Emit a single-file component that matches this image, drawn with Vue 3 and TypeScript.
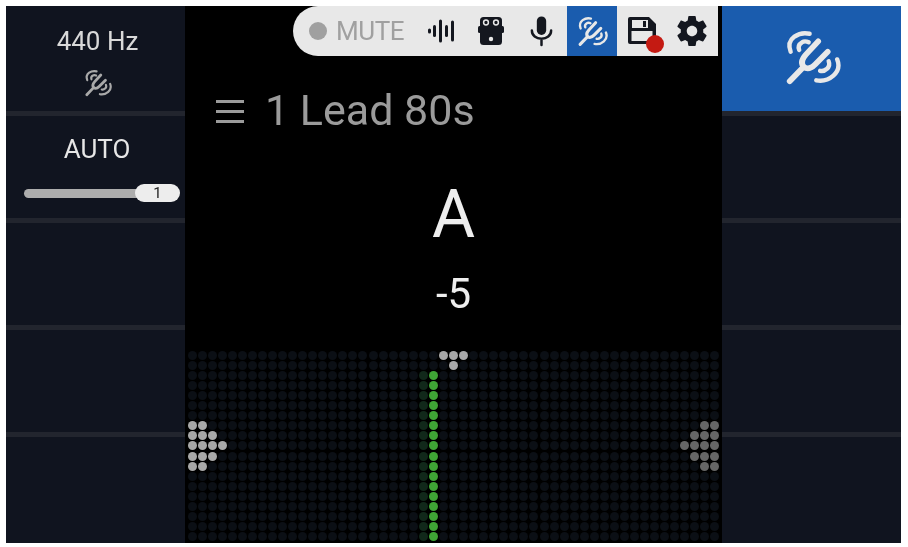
<script setup lang="ts">
import { computed } from 'vue'

const COLS = 53
const ROWS = 19

function dotClass(c: number, r: number): string {
  const dr = Math.abs(r - 9)
  if (dr <= 2 && c <= 3 - dr) return 'arrow-left'
  if (dr <= 2 && 52 - c <= 3 - dr) return 'arrow-right'
  if (r === 0 && c >= 25 && c <= 27) return 'arrow-top'
  if (r === 1 && c === 26) return 'arrow-top'
  if (c === 24 && r >= 2) return 'green'
  if (c === 23 && r >= 2) return 'green-dim'
  return ''
}

const dots = computed(() => {
  const list: { id: number; cls: string }[] = []
  for (let r = 0; r < ROWS; r++) {
    for (let c = 0; c < COLS; c++) {
      list.push({ id: r * COLS + c, cls: dotClass(c, r) })
    }
  }
  return list
})

const leftCells = [3, 4, 5]
const rightCells = [1, 2, 3, 4]
</script>

<template>
  <div class="screen">
    <svg class="defs" width="0" height="0" aria-hidden="true">
      <symbol id="fork" viewBox="0 0 60 60">
        <g fill="none" stroke="currentColor" stroke-linecap="round" stroke-linejoin="round">
          <path stroke-width="6" d="M6 55 L20 40.5" />
          <path stroke-width="6" d="M36 13 L23 27 Q16 35 21 40 Q26 44 33 37 L46 24" />
          <path stroke-width="4.6" d="M7 24 Q3 14 11 8 Q18 3 27 5" />
          <path stroke-width="4.6" d="M16 22 Q14 17 19 14 Q22 12 26 14" />
          <path stroke-width="4.6" d="M56 32 Q60 42 52 49 Q44 56 34 54" />
          <path stroke-width="4.6" d="M47 34 Q49 39 45 42 Q42 45 38 44" />
        </g>
      </symbol>
    </svg>

    <aside class="side">
      <div class="cell freq">
        <span class="freq-label">440 Hz</span>
        <svg class="side-fork"><use href="#fork" /></svg>
      </div>
      <div class="cell auto">
        <span class="auto-label">AUTO</span>
        <div class="slider">
          <div class="track"></div>
          <div class="thumb">1</div>
        </div>
      </div>
      <div v-for="n in leftCells" :key="n" class="cell"></div>
    </aside>

    <main class="center">
      <div class="toolbar">
        <div class="mute"><span class="mute-dot"></span><span>MUTE</span></div>
        <button class="tool wave">
          <svg width="30" height="30" viewBox="0 0 30 30">
            <g fill="#14171f">
              <rect x="2" y="12.5" width="3" height="5" rx="1.5" />
              <rect x="7" y="9" width="3" height="12" rx="1.5" />
              <rect x="13" y="3.5" width="3" height="23" rx="1.5" />
              <rect x="19" y="9" width="3" height="12" rx="1.5" />
              <rect x="25" y="4.5" width="3" height="21" rx="1.5" />
            </g>
          </svg>
        </button>
        <button class="tool pedal">
          <svg width="30" height="30" viewBox="0 0 30 30">
            <rect x="2" y="10" width="26" height="7" rx="1.5" fill="#14171f" />
            <rect x="4" y="1" width="22" height="28" rx="3.5" fill="#14171f" />
            <circle cx="10" cy="6.5" r="2.4" fill="none" stroke="#e8e8e8" stroke-width="1.5" />
            <circle cx="20" cy="6.5" r="2.4" fill="none" stroke="#e8e8e8" stroke-width="1.5" />
            <circle cx="15" cy="23" r="2.2" fill="#e8e8e8" />
          </svg>
        </button>
        <button class="tool mic">
          <svg width="33" height="33" viewBox="0 0 24 24">
            <path fill="#14171f" d="M12 14.5a3.4 3.4 0 0 0 3.4-3.4V4.4a3.4 3.4 0 0 0-6.8 0v6.7a3.4 3.4 0 0 0 3.4 3.4z" />
            <path fill="none" stroke="#14171f" stroke-width="1.8" stroke-linecap="round" d="M5 11.2c0 3.8 3.2 6 7 6s7-2.2 7-6M12 17.2v4.6" />
          </svg>
        </button>
        <button class="tool active">
          <svg width="31" height="31"><use href="#fork" /></svg>
        </button>
        <button class="tool save">
          <svg width="30" height="30" viewBox="0 0 30 30">
            <path fill="#14171f" d="M3 1h19l7 7v18a2 2 0 0 1-2 2H3a2 2 0 0 1-2-2V3a2 2 0 0 1 2-2z" />
            <rect x="5" y="4" width="16" height="8" fill="#e8e8e8" />
            <rect x="16" y="5" width="3" height="6" fill="#14171f" />
            <rect x="4.5" y="15" width="21" height="10" fill="#e8e8e8" />
          </svg>
          <span class="rec"></span>
        </button>
        <button class="tool gear">
          <svg width="36" height="36" viewBox="0 0 24 24">
            <path fill="#14171f" d="M19.43 12.98c.04-.32.07-.64.07-.98s-.03-.66-.07-.98l2.11-1.65c.19-.15.24-.42.12-.64l-2-3.46c-.12-.22-.39-.3-.61-.22l-2.49 1c-.52-.4-1.08-.73-1.69-.98l-.38-2.65A.488.488 0 0 0 14 2h-4c-.25 0-.46.18-.49.42l-.38 2.65c-.61.25-1.17.59-1.69.98l-2.49-1c-.23-.09-.49 0-.61.22l-2 3.46c-.13.22-.07.49.12.64l2.11 1.65c-.04.32-.07.65-.07.98s.03.66.07.98l-2.11 1.65c-.19.15-.24.42-.12.64l2 3.46c.12.22.39.3.61.22l2.49-1c.52.4 1.08.73 1.69.98l.38 2.65c.03.24.24.42.49.42h4c.25 0 .46-.18.49-.42l.38-2.65c.61-.25 1.17-.59 1.69-.98l2.49 1c.23.09.49 0 .61-.22l2-3.46c.12-.22.07-.49-.12-.64l-2.11-1.65zM12 15.5c-1.93 0-3.5-1.57-3.5-3.5s1.57-3.5 3.5-3.5 3.5 1.57 3.5 3.5-1.57 3.5-3.5 3.5z" />
          </svg>
        </button>
      </div>

      <div class="title">
        <span class="burger"><i></i><i></i><i></i></span>
        <span>1 Lead 80s</span>
      </div>
      <div class="note">A</div>
      <div class="cents">-5</div>

      <div class="matrix">
        <span v-for="d in dots" :key="d.id" class="dot" :class="d.cls"></span>
      </div>
    </main>

    <aside class="side">
      <div class="cell selected">
        <svg class="big-fork"><use href="#fork" /></svg>
      </div>
      <div v-for="n in rightCells" :key="n" class="cell"></div>
    </aside>
  </div>
</template>

<style>
html, body { margin: 0; background: #fff; }
</style>

<style scoped>
.screen {
  display: flex;
  box-sizing: border-box;
  width: 908px;
  height: 547px;
  padding: 6px 7px 4px 6px;
  font-family: Roboto, "Liberation Sans", sans-serif;
  background: #fff;
  overflow: hidden;
  filter: blur(0.5px);
}
.defs { position: absolute; }
.side {
  width: 179px;
  flex: none;
  display: grid;
  grid-template-rows: 110px 107px 107px 107px 1fr;
  background: #10141f;
}
.cell {
  min-height: 0;
  display: flex;
  flex-direction: column;
  align-items: center;
  box-sizing: border-box;
  border-bottom: 5px solid #22252e;
}
.cell:last-child { border-bottom: 0; }
.freq { color: #d9d9d9; padding: 21px 0 0 4px; }
.freq-label { font-size: 26px; line-height: 29px; }
.side-fork { width: 28px; height: 28px; margin-top: 13px; color: #a9a9a9; }
.auto { padding: 19px 0 0 3px; color: #e6e6e6; }
.auto-label { font-size: 26px; line-height: 28px; }
.slider {
  align-self: stretch;
  display: flex;
  align-items: center;
  margin: 21px 5px 0 15px;
}
.track {
  flex: 1;
  height: 9px;
  margin-right: -4px;
  border-radius: 5px 0 0 5px;
  background: #adadad;
}
.thumb {
  width: 45px;
  height: 18px;
  border-radius: 9px;
  background: #ededed;
  color: #222;
  font-size: 15px;
  line-height: 18px;
  text-align: center;
  position: relative;
}
.selected { background: #1a5cae; justify-content: center; padding: 0 0 2px 1px; border-bottom-color: #22252e; }
.big-fork { width: 57px; height: 57px; color: #e8e8e8; }

.center {
  flex: 1;
  position: relative;
  display: flex;
  flex-direction: column;
  align-items: center;
  background: #000;
  min-width: 0;
}
.toolbar {
  position: absolute;
  top: 0;
  right: 4px;
  width: 425px;
  height: 50px;
  display: flex;
  align-items: stretch;
  background: #e8e8e8;
  border-radius: 25px 0 0 25px;
  box-sizing: border-box;
}
.mute {
  width: 123px;
  flex: none;
  display: flex;
  align-items: center;
  gap: 9px;
  padding-left: 16px;
  box-sizing: border-box;
  color: #a0a0a0;
  font-size: 26px;
  letter-spacing: -0.4px;
}
.mute-dot {
  width: 18px;
  height: 18px;
  border-radius: 50%;
  background: #a0a0a0;
}
.tool {
  all: unset;
  position: relative;
  display: flex;
  align-items: center;
  justify-content: center;
  box-sizing: border-box;
  flex: none;
  height: 50px;
  width: 50px;
}
.tool.active { background: #1a5cae; color: #e8e8e8; margin-left: 1px; }
.rec {
  position: absolute;
  left: 29px;
  top: 29px;
  width: 18px;
  height: 18px;
  border-radius: 50%;
  background: #c41a12;
}

.title {
  align-self: flex-start;
  display: flex;
  align-items: center;
  gap: 21px;
  margin: 79px 0 0 31px;
  color: #9b9b9b;
  font-size: 43px;
  line-height: 50px;
}
.burger {
  display: flex;
  flex-direction: column;
  gap: 7px;
  width: 28px;
  margin-top: 2px;
}
.burger i { display: block; height: 3px; background: #9b9b9b; }
.note {
  margin-top: 45px;
  color: #eee;
  font-size: 66px;
  line-height: 70px;
}
.cents {
  margin-top: 19px;
  color: #eee;
  font-size: 42px;
  line-height: 50px;
}
.matrix {
  margin-top: auto;
  align-self: stretch;
  box-sizing: border-box;
  height: 193px;
  padding: 0 2px 1px 2px;
  display: grid;
  grid-template-columns: repeat(53, 1fr);
  grid-template-rows: repeat(19, 1fr);
  place-items: center;
}
.dot {
  width: 9px;
  height: 9px;
  border-radius: 50%;
  background: #0b0f15;
}
.arrow-left, .arrow-top { background: #a8a8a8; }
.arrow-right { background: #666; }
.green { background: #3fa535; }
.green-dim { background: #11281a; }
</style>
